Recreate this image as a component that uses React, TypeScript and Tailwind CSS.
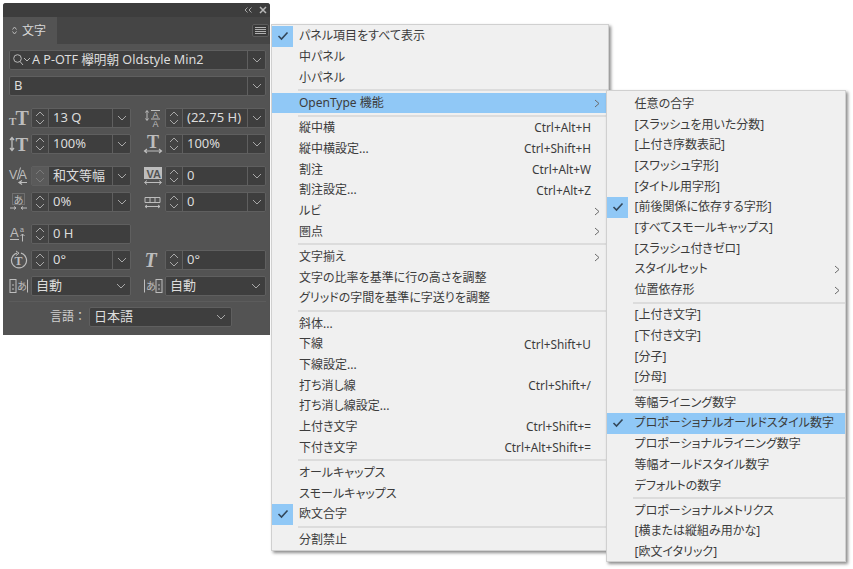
import React from 'react';

const C = '#bdbdbd';

type Item = { t: string; k?: string; sub?: boolean; check?: boolean; on?: boolean } | 'sep';

const mainMenu: Item[] = [
  { t: 'パネル項目をすべて表示', check: true },
  { t: '中パネル' },
  { t: '小パネル' },
  'sep',
  { t: 'OpenType 機能', sub: true, on: true },
  'sep',
  { t: '縦中横', k: 'Ctrl+Alt+H' },
  { t: '縦中横設定...', k: 'Ctrl+Shift+H' },
  { t: '割注', k: 'Ctrl+Alt+W' },
  { t: '割注設定...', k: 'Ctrl+Alt+Z' },
  { t: 'ルビ', sub: true },
  { t: '圏点', sub: true },
  'sep',
  { t: '文字揃え', sub: true },
  { t: '文字の比率を基準に行の高さを調整' },
  { t: 'グリッドの字間を基準に字送りを調整' },
  'sep',
  { t: '斜体...' },
  { t: '下線', k: 'Ctrl+Shift+U' },
  { t: '下線設定...' },
  { t: '打ち消し線', k: 'Ctrl+Shift+/' },
  { t: '打ち消し線設定...' },
  { t: '上付き文字', k: 'Ctrl+Shift+=' },
  { t: '下付き文字', k: 'Ctrl+Alt+Shift+=' },
  'sep',
  { t: 'オールキャップス' },
  { t: 'スモールキャップス' },
  { t: '欧文合字', check: true },
  'sep',
  { t: '分割禁止' },
];

const subMenu: Item[] = [
  { t: '任意の合字' },
  { t: '[スラッシュを用いた分数]' },
  { t: '[上付き序数表記]' },
  { t: '[スワッシュ字形]' },
  { t: '[タイトル用字形]' },
  { t: '[前後関係に依存する字形]', check: true },
  { t: '[すべてスモールキャップス]' },
  { t: '[スラッシュ付きゼロ]' },
  { t: 'スタイルセット', sub: true },
  { t: '位置依存形', sub: true },
  'sep',
  { t: '[上付き文字]' },
  { t: '[下付き文字]' },
  { t: '[分子]' },
  { t: '[分母]' },
  'sep',
  { t: '等幅ライニング数字' },
  { t: 'プロポーショナルオールドスタイル数字', check: true, on: true },
  { t: 'プロポーショナルライニング数字' },
  { t: '等幅オールドスタイル数字' },
  { t: 'デフォルトの数字' },
  'sep',
  { t: 'プロポーショナルメトリクス' },
  { t: '[横または縦組み用かな]' },
  { t: '[欧文イタリック]' },
];

function Chev({ dir, color = '#a8a8a8' }: { dir: 'up' | 'down' | 'right'; color?: string }) {
  const d = dir === 'up' ? 'M1 5 L5 1 L9 5' : dir === 'down' ? 'M1 1 L5 5 L9 1' : 'M1 1 L5 4.5 L1 8';
  const w = dir === 'right' ? 6 : 10;
  const h = dir === 'right' ? 9 : 6;
  return (
    <svg width={w} height={h} viewBox={`0 0 ${w} ${h}`} className="block">
      <path d={d} fill="none" stroke={color} strokeWidth="1" />
    </svg>
  );
}

function MenuRows({ items, pl, pr }: { items: Item[]; pl: string; pr: string }) {
  return (
    <>
      {items.map((it, i) => {
        if (it === 'sep') {
          return <div key={i} className="h-[4.6px] ml-[26px] flex items-center"><div className="h-[2px] w-full bg-[#dcdcdc]" /></div>;
        }
        return (
          <div key={i} className={`relative h-[20.7px] flex items-center ${pl} ${pr} text-[12px] text-[#3c3c3c] ${it.on ? 'bg-[#90c8f6]' : ''}`}>
            {it.check && (
              <div className="absolute left-0 top-0 w-[21px] h-[20.7px] bg-[#90c8f6] flex items-center justify-center">
                <svg width="12" height="10" viewBox="0 0 12 10"><path d="M1.5 5 L4.5 8 L10.5 1.5" fill="none" stroke="#33475a" strokeWidth="1.6" /></svg>
              </div>
            )}
            <span className="flex-1 whitespace-nowrap [font-feature-settings:'palt']">{it.t}</span>
            {it.k && <span className="whitespace-nowrap text-[11.8px] mr-[9px]">{it.k}</span>}
            {it.sub && <Chev dir="right" color="#6a6a6a" />}
          </div>
        );
      })}
    </>
  );
}

const Svg = ({ children, w = 20 }: { children: React.ReactNode; w?: number }) => (
  <svg width={w} height="20" viewBox={`0 0 ${w} 20`} className="block shrink-0 overflow-visible">{children}</svg>
);

const serif = 'Liberation Serif, serif';

const IconSize = () => (
  <Svg><text x="0" y="17" fontSize="11" fontWeight="700" fontFamily={serif} fill={C}>T</text><text x="6.5" y="17" fontSize="20" fontWeight="700" fontFamily={serif} fill={C}>T</text></Svg>
);
const IconLeading = () => (
  <Svg>
    <path d="M4 3 V12 M2.5 4.5 L4 2.5 L5.5 4.5 M2.5 10.5 L4 12.5 L5.5 10.5" stroke={C} fill="none" />
    <path d="M8 2.5 H17 M8 11 H17" stroke={C} />
    <text x="9.5" y="10" fontSize="9" fontFamily="Liberation Sans, sans-serif" fill={C}>A</text>
    <text x="9.5" y="19" fontSize="9" fontFamily="Liberation Sans, sans-serif" fill={C}>A</text>
  </Svg>
);
const IconVScale = () => (
  <Svg>
    <path d="M3 4 V16 M1 6 L3 3.5 L5 6 M1 14 L3 16.5 L5 14" stroke={C} fill="none" strokeWidth="1.3" />
    <text x="6.5" y="17" fontSize="19" fontWeight="700" fontFamily={serif} fill={C}>T</text>
  </Svg>
);
const IconHScale = () => (
  <Svg>
    <text x="4" y="14" fontSize="18" fontWeight="700" fontFamily={serif} fill={C}>T</text>
    <path d="M2 17 H18 M4 15 L1.5 17 L4 19 M16 15 L18.5 17 L16 19" stroke={C} fill="none" strokeWidth="1.2" />
  </Svg>
);
const IconKern = () => (
  <Svg>
    <text x="0" y="13" fontSize="12.5" fontFamily="Liberation Sans, sans-serif" fill={C}>V</text>
    <text x="9.5" y="13" fontSize="12.5" fontFamily="Liberation Sans, sans-serif" fill={C}>A</text>
    <path d="M8 14 L11.5 1.5" stroke={C} />
    <path d="M10 16.5 H18 M13 14.5 L10 16.5 L13 18.5" stroke={C} fill="none" strokeWidth="1.2" />
  </Svg>
);
const IconTrack = () => (
  <Svg>
    <rect x="1" y="1" width="18" height="12" fill={C} />
    <text x="3.5" y="11.5" fontSize="11" fontWeight="700" fontFamily="Liberation Sans, sans-serif" fill="#535353">VA</text>
    <path d="M2 16.5 H18 M4 14.5 L1.5 16.5 L4 18.5 M16 14.5 L18.5 16.5 L16 18.5" stroke={C} fill="none" />
  </Svg>
);
const IconTsume = () => (
  <Svg>
    <rect x="3.5" y="1.5" width="12" height="11" fill="none" stroke="#8f8f8f" strokeDasharray="1 1" />
    <text x="4.5" y="11.5" fontSize="10" fontFamily="Noto Sans CJK JP, sans-serif" fill={C}>あ</text>
    <path d="M1 16 H7 M5 14.5 L7 16 L5 17.5 M12 16 H18 M14 14.5 L12 16 L14 17.5" stroke={C} fill="none" />
  </Svg>
);
const IconGrid = () => (
  <Svg>
    <path d="M2 5.5 H17 V10.5 H2 Z M7 5.5 V10.5 M12 5.5 V10.5" stroke={C} fill="none" />
    <path d="M2 14.5 H17 M4 13 L2 14.5 L4 16 M15 13 L17 14.5 L15 16" stroke={C} fill="none" />
  </Svg>
);
const IconBaseline = () => (
  <Svg>
    <text x="1" y="13" fontSize="13" fontFamily="Liberation Sans, sans-serif" fill={C}>A</text>
    <text x="11" y="8" fontSize="7" fontFamily="Liberation Sans, sans-serif" fill={C}>a</text>
    <path d="M1 15.5 H10" stroke={C} />
    <path d="M13.5 17.5 V10 M11.5 12 L13.5 10 L15.5 12" stroke={C} fill="none" />
  </Svg>
);
const IconRotate = () => (
  <Svg>
    <path d="M8 3.2 A7.5 7.5 0 1 0 12 3.2" stroke={C} fill="none" strokeWidth="1.2" />
    <path d="M7 1 L10 3.2 L7 5.5" stroke={C} fill="none" />
    <text x="5.5" y="15" fontSize="12" fontWeight="700" fontFamily={serif} fill={C}>T</text>
  </Svg>
);
const IconItalic = () => (
  <Svg>
    <text x="1.5" y="17" fontSize="20" fontWeight="700" fontStyle="italic" fontFamily={serif} fill={C}>T</text>
  </Svg>
);
const IconMojiL = () => (
  <Svg>
    <rect x="1" y="3.5" width="6" height="13" fill="none" stroke={C} />
    <path d="M4 8 V10 M4 12 V14" stroke={C} />
    <text x="8" y="14" fontSize="10" fontFamily="Noto Sans CJK JP, sans-serif" fill={C}>あ</text>
    <path d="M18.5 3.5 V16.5" stroke={C} />
  </Svg>
);
const IconMojiR = () => (
  <Svg>
    <path d="M1.5 3.5 V16.5" stroke={C} />
    <text x="3" y="14" fontSize="10" fontFamily="Noto Sans CJK JP, sans-serif" fill={C}>あ</text>
    <rect x="13" y="3.5" width="6" height="13" fill="none" stroke={C} />
    <path d="M16 8 V10 M16 12 V14" stroke={C} />
  </Svg>
);

function Field({ icon, value, drop = true, stepper = true, disabled = false, right = false }: { icon: React.ReactNode; value: string; drop?: boolean; stepper?: boolean; disabled?: boolean; right?: boolean }) {
  return (
    <div className={`flex items-center ${right ? 'w-[123px]' : 'w-[122px]'} h-[20px]`}>
      <div className="w-[22px] shrink-0">{icon}</div>
      <div className="flex-1 min-w-0 flex h-full rounded-[2px] border border-[#5f5f5f] overflow-hidden">
        {stepper && (
          <div className={`w-[17px] shrink-0 flex flex-col items-center justify-center gap-[2px] border-r border-[#5f5f5f] ${disabled ? 'bg-[#5a5a5a]' : 'bg-[#434343]'}`}>
            <Chev dir="up" color={disabled ? '#7a7a7a' : '#a8a8a8'} />
            <Chev dir="down" color={disabled ? '#7a7a7a' : '#a8a8a8'} />
          </div>
        )}
        <div className="flex-1 min-w-0 bg-[#3e3e3e] flex items-center pl-[4px] text-[13px] text-[#dcdcdc] whitespace-nowrap">{value}</div>
        {drop && (
          <div className={`w-[18px] shrink-0 bg-[#3e3e3e] flex items-center justify-center ${stepper ? 'border-l border-[#5f5f5f]' : ''}`}>
            <Chev dir="down" />
          </div>
        )}
      </div>
    </div>
  );
}

const Row = ({ children, className = '' }: { children: React.ReactNode; className?: string }) => (
  <div className={`flex gap-[12px] ${className}`}>{children}</div>
);

export default function App() {
  return (
    <div className="relative w-[853px] h-[569px] bg-white overflow-hidden font-['Noto_Sans','Noto_Sans_CJK_JP',sans-serif]">
      {/* Character panel */}
      <div className="ml-[3px] pt-[3px]">
        <div className="w-[267px] h-[332px] bg-[#535353] rounded-t-[3px] overflow-hidden">
          <div className="h-[14px] bg-[#3d3d3d] flex items-center justify-end gap-[7px] pr-[3px]">
            <svg width="8" height="6" viewBox="0 0 8 6"><path d="M3.5 0.5 L1 3 L3.5 5.5 M7.5 0.5 L5 3 L7.5 5.5" fill="none" stroke="#a8a8a8" /></svg>
            <svg width="8" height="8" viewBox="0 0 8 8"><path d="M1 1 L7 7 M7 1 L1 7" stroke="#b8b8b8" strokeWidth="1.5" /></svg>
          </div>
          <div className="h-[27px] bg-[#454545] flex items-stretch justify-between">
            <div className="w-[54px] bg-[#535353] flex items-center pl-[9px] gap-[5px] text-[12px] text-[#d8d8d8]">
              <svg width="5" height="9" viewBox="0 0 5 9"><path d="M0.5 3.5 L2.5 1 L4.5 3.5 M0.5 5.5 L2.5 8 L4.5 5.5" fill="none" stroke="#b8b8b8" /></svg>
              <span>文字</span>
            </div>
            <div className="flex items-center pr-[1px]">
              <div className="w-[17px] h-[13px] rounded-[2px] bg-[#3a3a3a] border border-[#5c5c5c] flex flex-col items-center justify-center gap-[1px]">
                <div className="w-[11px] h-[1px] bg-[#b0b0b0]" />
                <div className="w-[11px] h-[1px] bg-[#b0b0b0]" />
                <div className="w-[11px] h-[1px] bg-[#b0b0b0]" />
                <div className="w-[11px] h-[1px] bg-[#b0b0b0]" />
              </div>
            </div>
          </div>

          <div className="pl-[6px] pr-[4px] pt-[6px]">
            <div className="h-[20px] flex rounded-[2px] border border-[#5f5f5f] bg-[#3e3e3e] overflow-hidden">
              <div className="flex-1 flex items-center pl-[2px] gap-[1px] text-[12.6px] text-[#dcdcdc] whitespace-nowrap">
                <svg width="19" height="14" viewBox="0 0 19 14">
                  <circle cx="5.5" cy="5.5" r="3.8" fill="none" stroke="#b8b8b8" />
                  <path d="M8 8.5 L11 12 M12 5 L15 8 L18 5" fill="none" stroke="#b8b8b8" />
                </svg>
                <span>A P-OTF 欅明朝 Oldstyle Min2</span>
              </div>
              <div className="w-[18px] border-l border-[#5f5f5f] flex items-center justify-center"><Chev dir="down" /></div>
            </div>
            <div className="mt-[6px] h-[20px] flex rounded-[2px] border border-[#5f5f5f] bg-[#3e3e3e] overflow-hidden">
              <div className="flex-1 flex items-center pl-[4px] text-[13px] text-[#dcdcdc]">B</div>
              <div className="w-[18px] border-l border-[#5f5f5f] flex items-center justify-center"><Chev dir="down" /></div>
            </div>

            <Row className="mt-[12px]">
              <Field icon={<IconSize />} value="13 Q" />
              <Field icon={<IconLeading />} value="(22.75 H)" right />
            </Row>
            <Row className="mt-[6px]">
              <Field icon={<IconVScale />} value="100%" />
              <Field icon={<IconHScale />} value="100%" right />
            </Row>
            <Row className="mt-[12px]">
              <Field icon={<IconKern />} value="和文等幅" disabled />
              <Field icon={<IconTrack />} value="0" right />
            </Row>
            <Row className="mt-[6px]">
              <Field icon={<IconTsume />} value="0%" />
              <Field icon={<IconGrid />} value="0" right />
            </Row>
            <Row className="mt-[12px]">
              <Field icon={<IconBaseline />} value="0 H" drop={false} />
            </Row>
            <Row className="mt-[6px]">
              <Field icon={<IconRotate />} value="0°" />
              <Field icon={<IconItalic />} value="0°" drop={false} right />
            </Row>
            <Row className="mt-[6px]">
              <Field icon={<IconMojiL />} value="自動" stepper={false} />
              <Field icon={<IconMojiR />} value="自動" stepper={false} right />
            </Row>
            <div className="mt-[5px] h-px bg-[#5c5c5c]" />
            <div className="mt-[5px] flex items-center gap-[4px] pl-[41px] text-[12px] text-[#d0d0d0]">
              <span className="whitespace-nowrap w-[35px]">言語：</span>
              <div className="w-[143px] h-[20px] rounded-[2px] border border-[#5f5f5f] bg-[#3e3e3e] flex items-center justify-between pl-[4px] pr-[5px] text-[13px] text-[#dcdcdc]">
                <span>日本語</span>
                <Chev dir="down" />
              </div>
            </div>
          </div>
        </div>
      </div>

      {/* Panel menu */}
      <div className="absolute left-[271px] top-[24px] w-[338px] h-[527px] bg-[#f0f0f0] border border-[#d0d0d0] pt-[1px] shadow-[2px_2px_3px_rgba(0,0,0,0.45)]">
        <MenuRows items={mainMenu} pl="pl-[27px]" pr="pr-[8px]" />
      </div>

      {/* OpenType submenu */}
      <div className="absolute left-[606px] top-[90px] w-[240px] h-[472px] bg-[#f0f0f0] border border-[#d0d0d0] pt-[2.6px] shadow-[2px_2px_3px_rgba(0,0,0,0.45)]">
        <MenuRows items={subMenu} pl="pl-[27.6px]" pr="pr-[5px]" />
      </div>
    </div>
  );
}
